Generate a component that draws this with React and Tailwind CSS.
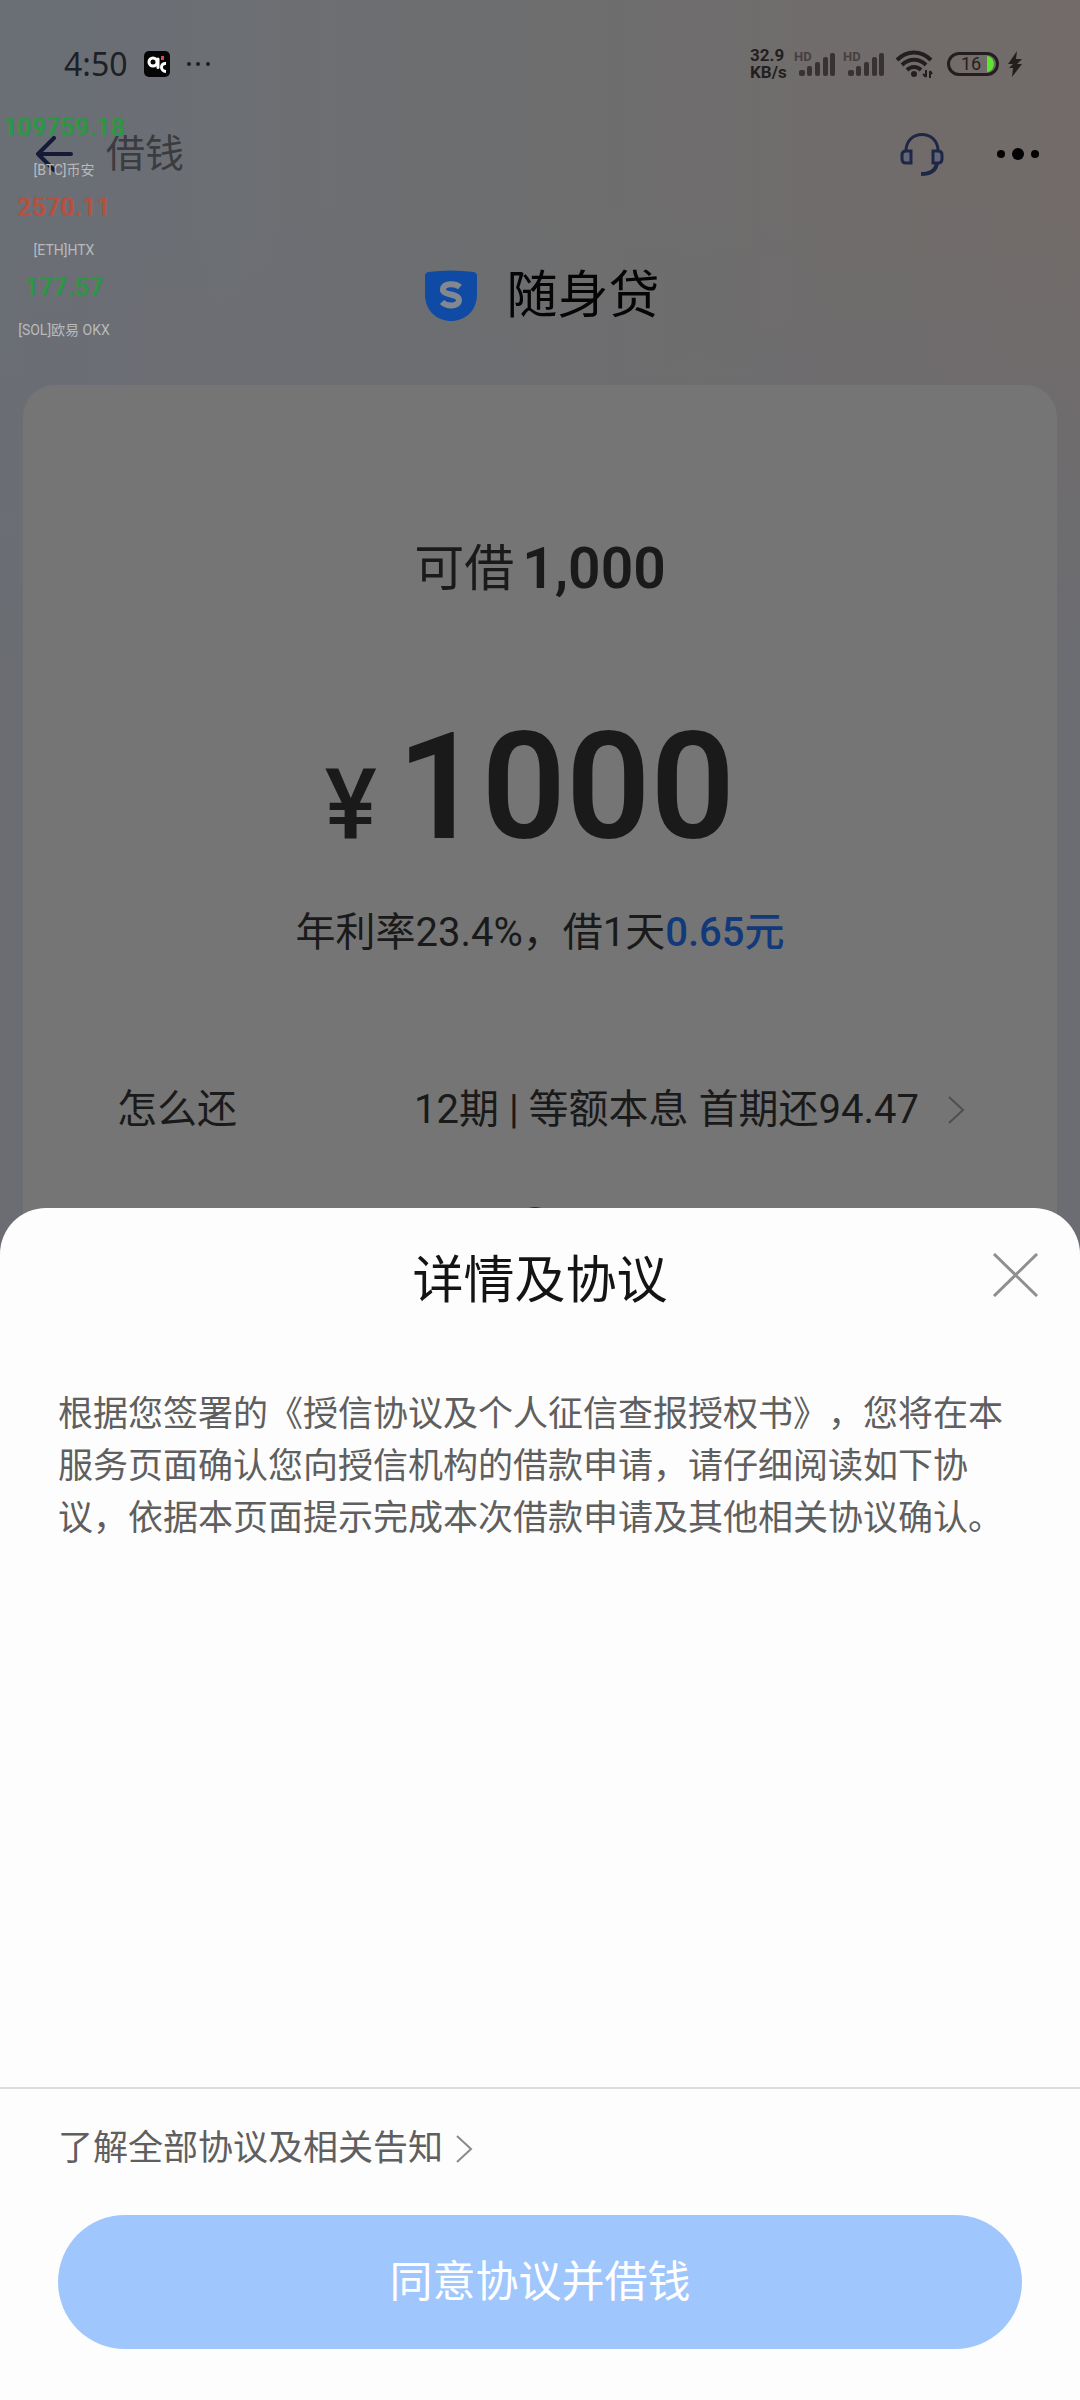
import React, { useState } from "react";

const tickers = [
  { price: "109759.18", label: "[BTC]币安", color: "text-[#2c9743]" },
  { price: "2570.11", label: "[ETH]HTX", color: "text-[#b8503f]" },
  { price: "177.57", label: "[SOL]欧易 OKX", color: "text-[#2c9743]" },
];

const Signal = () => (
  <div className="flex items-start">
    <span className="w-5 text-[13px] leading-3 font-bold text-[#463f40]">HD</span>
    <svg width="38" height="26" viewBox="0 0 38 26" className="-ml-4" fill="#393233">
      <rect x="1" y="19" width="6" height="6" rx="2" />
      <rect x="9" y="15" width="5" height="10" rx="2" />
      <rect x="17" y="11" width="5" height="14" rx="2" />
      <rect x="25" y="6" width="5" height="19" rx="2" />
      <rect x="32" y="2" width="5" height="23" rx="2" />
    </svg>
  </div>
);

const StatusBar = () => (
  <div className="flex h-[52px] items-center justify-between pl-16 pr-[58px]">
    <div className="flex items-center">
      <span className="w-20 font-['Noto_Sans'] text-[32px] leading-10 text-[#1d2025]">4:50</span>
      <svg width="26" height="26" viewBox="0 0 26 26">
        <rect width="26" height="26" rx="5" fill="#050505" />
        <circle cx="9" cy="11" r="4" fill="none" stroke="#fff" strokeWidth="3" />
        <path d="M14 8V16.5" stroke="#fff" strokeWidth="3" strokeLinecap="round" />
        <path d="M22 12.5C16 12 16 20 22 20.5" fill="none" stroke="#fff" strokeWidth="3" />
        <rect x="17" y="5" width="3" height="4" fill="#e0483e" />
      </svg>
      <svg width="26" height="6" viewBox="0 0 26 6" className="ml-4" fill="#1d2025">
        <circle cx="3" cy="3" r="2" />
        <circle cx="12" cy="3" r="2" />
        <circle cx="22" cy="3" r="2" />
      </svg>
    </div>

    <div className="flex items-center">
      <div className="w-11 text-[17px] leading-[17px] font-bold text-[#231f20]">
        <div>32.9</div>
        <div>KB/s</div>
      </div>
      <div className="flex gap-[7px]">
        <Signal />
        <Signal />
      </div>
      <svg width="38" height="28" viewBox="0 0 38 28" className="ml-2.5" fill="none" stroke="#231f20">
        <path d="M2 10C12 0 26 0 36 10" strokeWidth="4" />
        <path d="M7 15C14 8 24 8 31 15" strokeWidth="4" />
        <path d="M12 20C16 16 22 16 26 20" strokeWidth="4" />
        <circle cx="19" cy="24" r="3" fill="#231f20" stroke="none" />
        <path d="M31 20V27M31 27L28 24M35 28V21M35 21L37 24" strokeWidth="2" />
      </svg>
      <svg width="53" height="24" viewBox="0 0 53 24" className="ml-3.5" role="img" aria-label="16%">
        <path d="M40 4C49 5 49 19 40 20Z" fill="#5ce52c" />
        <rect x="1.5" y="1.5" width="49" height="21" rx="10.5" fill="none" stroke="#231f20" strokeWidth="3" />
        <text x="14" y="18" fontSize="18" fontFamily="Roboto, sans-serif" fill="#231f20">16</text>
      </svg>
      <svg width="14" height="26" viewBox="0 0 14 26" className="ml-2" fill="#231f20">
        <path d="M9 0L0 13H5L1 17H5L4 26L14 13H9L14 8H8Z" />
      </svg>
    </div>
  </div>
);

const NavBar = () => (
  <header className="flex h-20 items-center justify-between pl-9 pr-10">
    <div className="flex items-center">
      <button aria-label="返回" className="mr-8">
        <svg width="38" height="36" viewBox="0 0 38 36" fill="none" stroke="#141a38" strokeWidth="4" strokeLinecap="round" strokeLinejoin="round">
          <path d="M18 2L2 18L18 34M2 18H35" />
        </svg>
      </button>
      <h1 className="text-[39px] leading-[56px] text-[#3b3c3f]">借钱</h1>
    </div>
    <div className="flex items-center">
      <button aria-label="客服" className="mr-[52px]">
        <svg width="44" height="44" viewBox="0 0 44 44" fill="none" stroke="#1e2846" strokeWidth="3">
          <path d="M6 19C6 -3 38 -3 38 19" />
          <path d="M11 19H6Q2 19 2 23V27Q2 31 6 31H11Z" fill="#636777" />
          <path d="M33 19H38Q42 19 42 23V27Q42 31 38 31H33Z" fill="#636777" />
          <path d="M37 31C36 38 31 42 21 42" strokeWidth="4" />
        </svg>
      </button>
      <button aria-label="更多">
        <svg width="44" height="14" viewBox="0 0 44 14" fill="#020202">
          <circle cx="5" cy="7" r="4" />
          <circle cx="22" cy="7" r="6" />
          <circle cx="39" cy="7" r="4" />
        </svg>
      </button>
    </div>
  </header>
);

// floating crypto price widget, sits on top of everything
const TickerOverlay = () => (
  <div className="absolute top-[110px] left-0 w-32 text-center">
    {tickers.map((t) => (
      <div key={t.label} className="h-20">
        <div className={`text-[25px] leading-9 font-bold ${t.color}`}>{t.price}</div>
        <div className="mt-3.5 text-[14px] leading-5 whitespace-nowrap text-[#b9babc]">{t.label}</div>
      </div>
    ))}
  </div>
);

const Chevron = ({ className, color }) => (
  <svg width="18" height="28" viewBox="0 0 18 28" className={className} fill="none" stroke={color} strokeWidth="2">
    <path d="M2 1L16 14L2 27" />
  </svg>
);

const LoanCard = () => (
  <section className="mx-[23px] rounded-t-[32px] bg-[#757575] px-[94px] text-[#1a1a1a]">
    <div className="flex items-center justify-center pt-[148px] leading-[72px]">
      <span className="mr-2 text-[50px]">可借</span>
      <span className="text-[57px] font-semibold">1,000</span>
    </div>
    <div className="flex items-baseline justify-center pt-[76px] pr-5 font-semibold">
      <span className="mr-5 text-[98px] leading-none font-medium">¥</span>
      <span className="text-[148px] leading-[214px]">1000</span>
    </div>
    <p className="mt-2 text-center text-[40px] leading-[60px] [text-spacing-trim:space-all]">
      年利率23.4%，借1天<span className="font-medium text-[#12397a]">0.65元</span>
    </p>
    <button className="mt-[117px] flex w-full items-center text-[40px] leading-[60px]">
      <span>怎么还</span>
      <span className="ml-auto whitespace-pre">12期 | 等额本息 首期还94.47</span>
      <Chevron className="ml-7 mr-[-2px]" color="#4f4f4f" />
    </button>
    <div className="mt-[61px] flex items-center text-[40px] leading-[60px]">
      <span>收款账户</span>
      <svg width="40" height="50" viewBox="0 0 40 50" className="ml-auto mr-[408px]" fill="none" stroke="#12304f" strokeWidth="6">
        <circle cx="20" cy="22" r="18" />
      </svg>
    </div>
  </section>
);

const AgreementSheet = ({ onClose }) => (
  <div role="dialog" aria-labelledby="sheet-title" className="fixed inset-x-0 bottom-0 rounded-t-[46px] bg-[#fdfdfd]">
    <div className="flex h-36 items-center pl-[88px] pr-[41px]">
      <h2 id="sheet-title" className="flex-1 pt-0.5 text-center text-[51px] leading-[72px] text-[#141414]">
        详情及协议
      </h2>
      <button aria-label="关闭" onClick={onClose}>
        <svg width="47" height="44" viewBox="0 0 47 44" fill="none" stroke="#8f8f8f" strokeWidth="3" className="mb-2.5">
          <path d="M2 1L45 43M45 1L2 43" />
        </svg>
      </button>
    </div>

    <div className="min-h-[735px] px-[58px] pt-[37px] text-[35px] leading-[52px] text-[#5f5f5f]">
      <p className="[text-spacing-trim:space-all]">
        根据您签署的《授信协议及个人征信查报授权书》，您将在本服务页面确认您向授信机构的借款申请，请仔细阅读如下协议，依据本页面提示完成本次借款申请及其他相关协议确认。
      </p>
    </div>

    <div className="border-t-2 border-[#dcdcdc] px-[58px] pb-[51px]">
      <a href="#agreements" className="flex items-center pt-[34px] text-[35px] leading-[52px] text-[#5f5f5f]">
        了解全部协议及相关告知
        <Chevron className="ml-3" color="#8a8a8a" />
      </a>
      <button className="mt-10 h-[134px] w-full rounded-full bg-[#9fc7fd] text-[43px] text-white">
        同意协议并借钱
      </button>
    </div>
  </div>
);

const App = () => {
  const [open, setOpen] = useState(true);

  return (
    <div className="relative h-screen overflow-hidden bg-[linear-gradient(to_bottom,transparent_200px,#6b6d72_700px),linear-gradient(to_right,#6a6f76,#6e6e6f,#726b69)] pt-[38px] font-[Roboto,'Noto_Sans_CJK_SC',sans-serif]">
      <StatusBar />
      <div className="pt-6">
        <NavBar />
      </div>

      <div className="flex items-center justify-center pt-16 pb-[51px] pl-1">
        <svg width="54" height="52" viewBox="0 0 54 52" className="mr-7">
          <path d="M1 6Q1 3 4 2Q27 -1 50 2Q53 3 53 6V24C53 42 40 51 27 51C14 51 1 42 1 24Z" fill="#0f4aa5" />
          <path d="M36 17C31 13 20 13 19 19C18 26 35 23 35 30C35 37 23 37 18 32" fill="none" stroke="#83878f" strokeWidth="6" />
        </svg>
        <span className="text-[51px] leading-[76px] text-[#050505]">随身贷</span>
      </div>

      <LoanCard />
      <TickerOverlay />
      {open && <AgreementSheet onClose={() => setOpen(false)} />}
    </div>
  );
};

export default App;
